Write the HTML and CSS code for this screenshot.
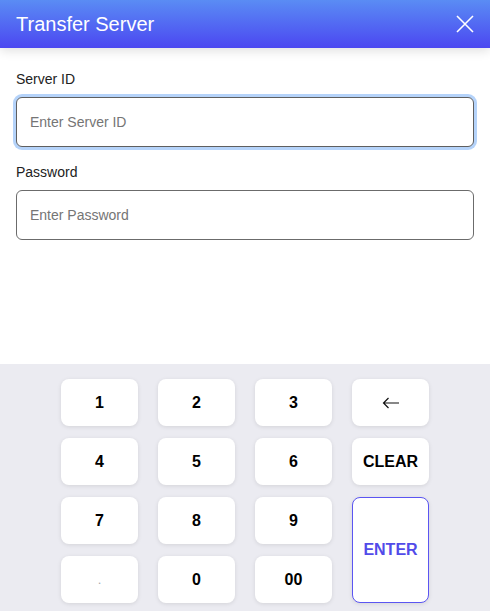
FILE: index.html
```html
<!DOCTYPE html>
<html>
<head>
<meta charset="utf-8">
<link rel="stylesheet" href="styles.css">
</head>
<body>
<div class="app">
  <header class="header">
    <h1 class="title">Transfer Server</h1>
    <button class="close" aria-label="Close">
      <svg width="20" height="20" viewBox="0 0 20 20"><path d="M2 2 L18 18 M18 2 L2 18" stroke="#fff" stroke-width="1.6" fill="none"/></svg>
    </button>
  </header>
  <form class="form">
    <label class="label">Server ID</label>
    <input class="input focused" type="text" placeholder="Enter Server ID">
    <label class="label">Password</label>
    <input class="input" type="password" placeholder="Enter Password">
  </form>
  <div class="keypad">
    <div class="grid">
      <button class="key">1</button>
      <button class="key">2</button>
      <button class="key">3</button>
      <button class="key arrow" aria-label="Backspace">
        <svg width="18" height="12" viewBox="0 0 18 12"><path d="M1.5 6 H17 M6.5 1 L1.5 6 L6.5 11" stroke="#111" stroke-width="1.2" fill="none"/></svg>
      </button>
      <button class="key">4</button>
      <button class="key">5</button>
      <button class="key">6</button>
      <button class="key">CLEAR</button>
      <button class="key">7</button>
      <button class="key">8</button>
      <button class="key">9</button>
      <button class="key enter">ENTER</button>
      <button class="key dot">.</button>
      <button class="key">0</button>
      <button class="key">00</button>
    </div>
  </div>
</div>
</body>
</html>
```
FILE: styles.css
```css
* { box-sizing: border-box; }
html, body { margin: 0; padding: 0; }
body {
  font-family: "Liberation Sans", Arial, sans-serif;
  background: #fff;
}
.app {
  height: 611px;
  display: flex;
  flex-direction: column;
}
.header {
  height: 48px;
  flex: none;
  display: flex;
  align-items: center;
  justify-content: space-between;
  padding: 0 16px;
  background: linear-gradient(180deg, #5a8cf4 0%, #4b47f1 100%);
  box-shadow: 0 3px 10px rgba(0,0,0,0.12);
  position: relative;
  z-index: 1;
}
.title {
  margin: 0;
  font-size: 20px;
  font-weight: 400;
  color: #fff;
}
.close {
  background: none;
  border: 0;
  padding: 0;
  width: 20px;
  height: 20px;
  margin-right: -1px;
  display: flex;
}
.form {
  display: flex;
  flex-direction: column;
  padding: 23px 16px 0;
}
.label {
  font-size: 14px;
  line-height: 16px;
  color: #222;
  margin-bottom: 10px;
}
.input {
  height: 50px;
  border: 1px solid #6b6b6b;
  border-radius: 6px;
  padding: 0 13px;
  font-family: "Liberation Sans", Arial, sans-serif;
  font-size: 14px;
  color: #333;
  margin-bottom: 17px;
  outline: none;
}
.input::placeholder { color: #757575; }
.input.focused {
  box-shadow: 0 0 0 3px #b5d3fa;
  border-color: #5f5f5f;
}
.keypad {
  margin-top: auto;
  background: #ebebf1;
  padding: 15px 0 8px;
  display: flex;
  justify-content: center;
}
.grid {
  display: grid;
  grid-template-columns: repeat(4, 77px);
  grid-template-rows: repeat(4, 47px);
  column-gap: 20px;
  row-gap: 12px;
}
.key {
  border: 0;
  border-radius: 8px;
  background: #fff;
  box-shadow: 0 1px 4px rgba(0,0,0,0.10);
  font-family: "Liberation Sans", Arial, sans-serif;
  font-size: 16px;
  font-weight: 700;
  color: #000;
  padding: 0;
}
.key.arrow {
  display: flex;
  align-items: center;
  justify-content: center;
}
.key.dot {
  color: #aaa;
  font-weight: 400;
  font-size: 13px;
}
.key.enter {
  grid-column: 4;
  grid-row: 3 / span 2;
  border: 1px solid #5b55f2;
  color: #524be9;
}
```
